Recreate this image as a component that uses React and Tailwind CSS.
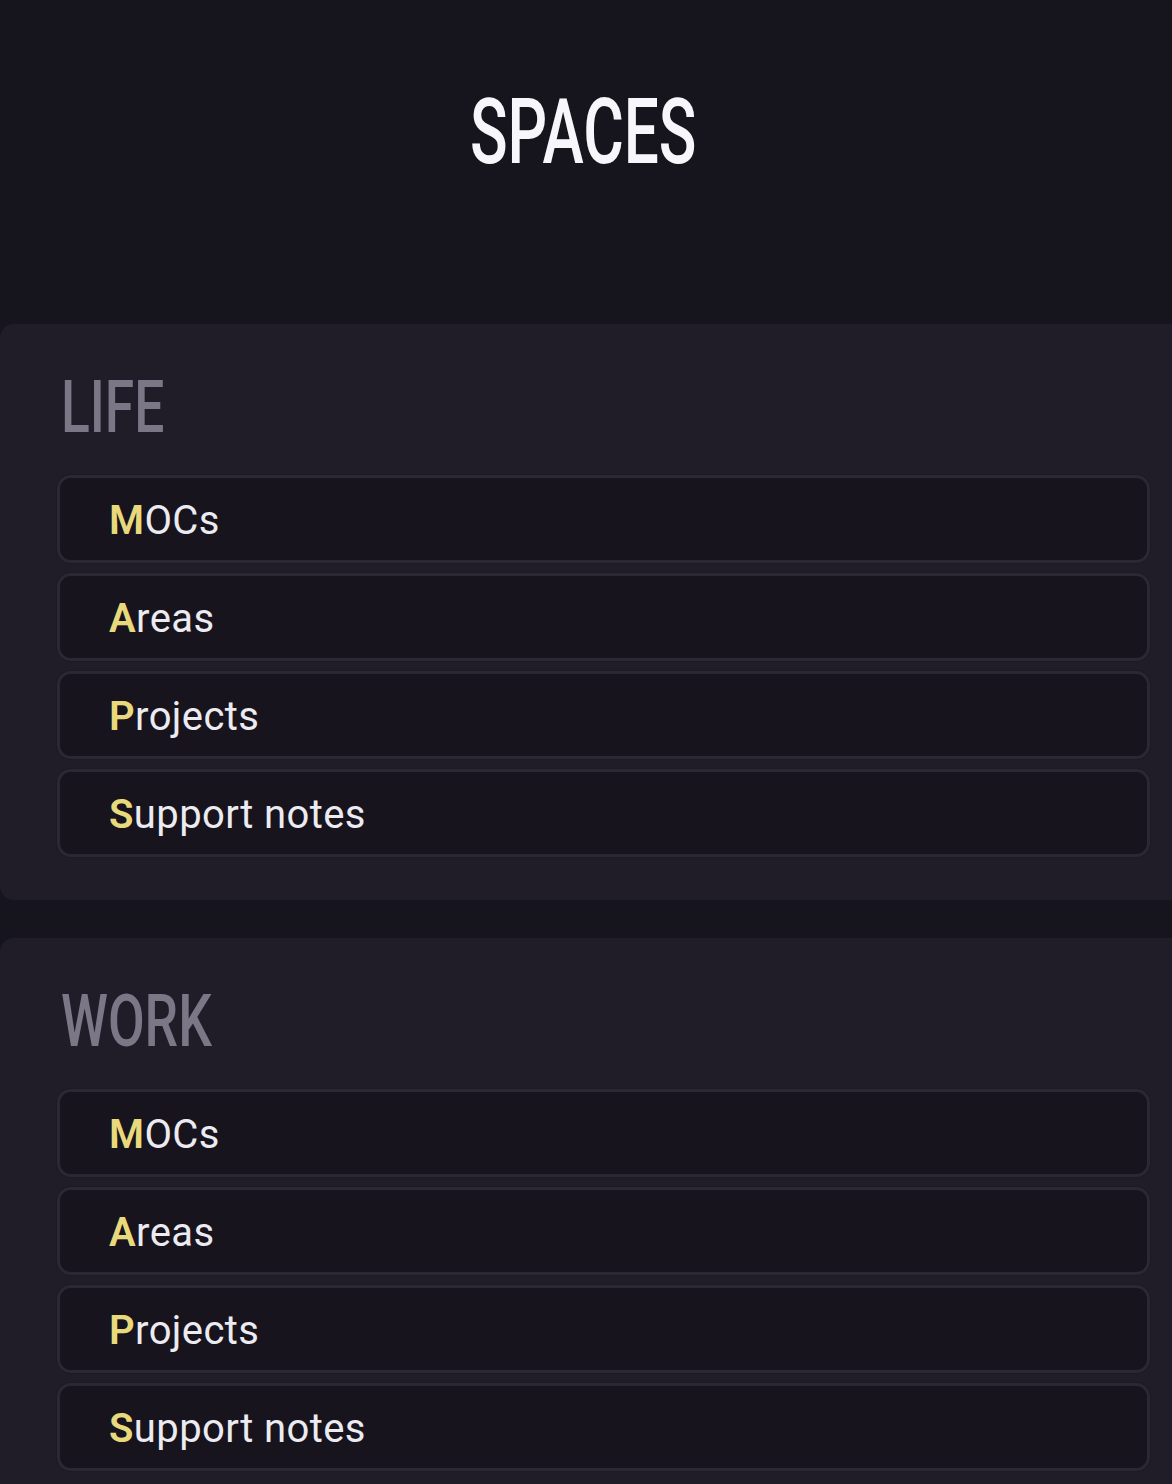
import React from 'react';

const spaces = [
  { title: 'LIFE', items: ['MOCs', 'Areas', 'Projects', 'Support notes'] },
  { title: 'WORK', items: ['MOCs', 'Areas', 'Projects', 'Support notes'] },
];

const headingFont = { fontFamily: 'Roboto, "DejaVu Sans", sans-serif' };

const SpaceLink = ({ label }) => (
  <div className="h-[88px] flex items-center pl-[49px] pt-[4px] rounded-[14px] border-[3px] border-[#2b2733] bg-[#17141d] shadow-[0_0_0_1px_#1d1a24]">
    <span className="text-[40px] leading-none tracking-[0.01em] text-[#ecebf1]" style={{ fontFamily: 'Roboto, "Open Sans", sans-serif' }}>
      <span className="font-semibold text-[#e7d97c]">{label[0]}</span>
      {label.slice(1)}
    </span>
  </div>
);

const SpaceCard = ({ space }) => (
  <section className="mr-[-16px] rounded-[14px] bg-[#211d28] pt-[48px] pb-[43px] pl-[57px] pr-[38px]">
    <h2 className="mb-[31px] pl-[4px] text-[72px] leading-none font-medium text-[#7b7787]" style={headingFont}>
      <span className="inline-block origin-left scale-x-[0.74]">{space.title}</span>
    </h2>
    <div className="flex flex-col gap-[10px]">
      {space.items.map((item) => (
        <SpaceLink key={item} label={item} />
      ))}
    </div>
  </section>
);

const App = () => {
  return (
    <div className="min-h-[1484px] bg-[#16141c] overflow-hidden">
      <header className="h-[324px] flex justify-center pt-[88px] pr-[6px]">
        <h1 className="text-[90px] leading-none font-medium text-[#f7f6fa]" style={headingFont}>
          <span className="inline-block scale-x-[0.69]">SPACES</span>
        </h1>
      </header>
      <div className="flex flex-col gap-[38px]">
        {spaces.map((space) => (
          <SpaceCard key={space.title} space={space} />
        ))}
      </div>
    </div>
  );
};

export default App;
